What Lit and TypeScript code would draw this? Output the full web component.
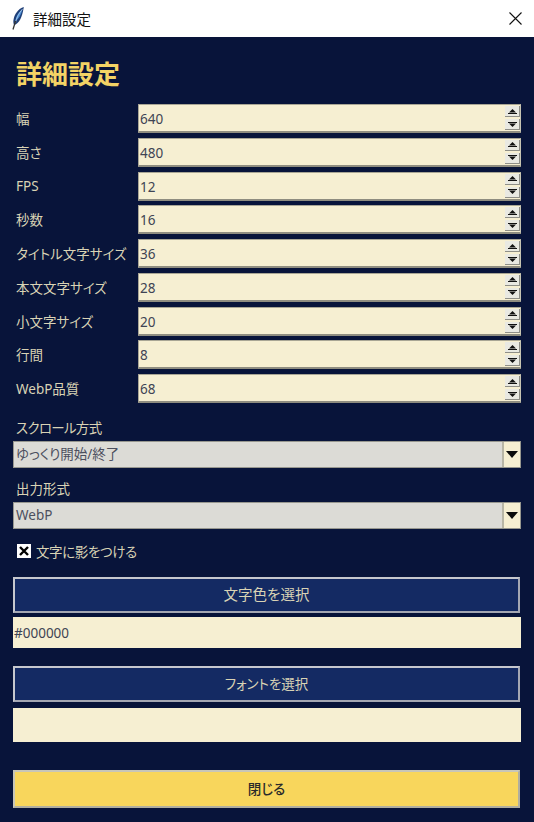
import { LitElement, html, css } from "lit";
import { customElement } from "lit/decorators.js";

const rows: [string, string][] = [
  ["幅", "640"], ["高さ", "480"], ["FPS", "12"], ["秒数", "16"],
  ["タイトル文字サイズ", "36"], ["本文文字サイズ", "28"], ["小文字サイズ", "20"],
  ["行間", "8"], ["WebP品質", "68"],
];

@customElement("app-root")
export class AppRoot extends LitElement {
  static styles = css`
    :host { display: block; width: 534px; height: 822px; overflow: hidden; background: #08143a;
      font-family: "Noto Sans", "Noto Sans CJK JP", sans-serif; font-size: 13.5px; color: #d9d3b5;
      font-feature-settings: "palt" 1; }
    * { box-sizing: border-box; }
    .titlebar { height: 37px; background: #fff; display: flex; align-items: center; padding: 0 12px 0 11px; color: #111; font-size: 14.5px; }
    .titlebar .feather { width: 15px; height: 26px; margin-right: 7px; }
    .titlebar .name { flex: 1; }
    .content { padding: 0 13px; display: flex; flex-direction: column; }
    h1 { margin: 18px 0 0 3px; font-size: 26px; line-height: 38px; height: 49px; font-weight: 700; color: #f3d365; }
    .rows { display: grid; grid-template-columns: 125px 383px; row-gap: 4.75px; grid-auto-rows: 29px; }
    .label { padding: 0 0 1px 3px; display: flex; align-items: center; height: 29px; white-space: nowrap; }
    .entry { background: #f6efd2; border: 1px solid #a9a695; border-right: 1px solid #c8c5b2; border-bottom: 2px solid #8f8d80; color: #3f4454;
      display: flex; align-items: center; padding: 2px 0 0 1px; }
    .entry .v { flex: 1; }
    .spin { width: 15px; height: 100%; margin-top: -2px; display: flex; flex-direction: column; gap: 2px; padding: 0; }
    .spin span { flex: 1; background: #e9e9e2; display: flex; align-items: center; justify-content: center; border-right: 1px solid #8f8f88; border-bottom: 1px solid #8f8f88; }
    .spin svg { width: 9px; height: 5px; display: block; }
    .fieldlabel { padding-left: 3px; height: 20px; line-height: 21px; white-space: nowrap; }
    .fieldlabel.first { margin-top: 15px; letter-spacing: -0.7px; }
    .fieldlabel.second { margin-top: 11px; }
    .combo { height: 27px; margin-top: 3px; background: #dcdbd6; border: 1px solid #97978f; display: flex; align-items: stretch; color: #4c4f5e; }
    .combo .v { flex: 1; padding-left: 2px; line-height: 25px; }
    .combo .arrow { width: 18px; background: #f6efd2; border-left: 2px solid #b8b6a6; display: flex; align-items: center; justify-content: center; }
    .combo .arrow svg { width: 12px; height: 7px; }
    .check { display: flex; align-items: center; height: 20px; margin-top: 12px; padding-left: 4px; gap: 5px; letter-spacing: -0.4px; }
    .box { width: 14px; height: 14px; background: #fff; display: flex; align-items: center; justify-content: center; }
    .box svg { width: 10px; height: 10px; display: block; }
    .btn { border: 2px solid; border-color: #c6c8ce #a4a7b3 #a4a7b3 #c6c8ce; display: flex; align-items: center; justify-content: center; color: #d9d3b5; background: #142a63; padding-bottom: 3px; margin-right: 1px; }
    .b1 { height: 36px; margin-top: 16px; font-size: 14.5px; }
    .b2 { height: 36px; margin-top: 18px; }
    .plain { background: #f6efd2; color: #3f4454; padding-left: 1px; display: flex; align-items: center; }
    .p1 { height: 31px; margin-top: 4px; }
    .p2 { height: 34px; margin-top: 6px; }
    .close { height: 38px; margin-top: 28px; background: #f8d65c; color: #2a2a2a; border-color: #c8c6b8 #b0ae9f #b0ae9f #c8c6b8; font-weight: 500; }
  `;

  render() {
    const up = html`<svg viewBox="0 0 9 5"><path d="M4.5 0 8 3.5H1Z" fill="#111"/><path d="M0 4.5H9" stroke="#111" stroke-width="1"/></svg>`;
    const down = html`<svg viewBox="0 0 9 5"><path d="M0 .5H9" stroke="#111" stroke-width="1"/><path d="M1 1.5H8L4.5 5Z" fill="#111"/></svg>`;
    const arrow = html`<svg viewBox="0 0 12 7"><path d="M0 0H12L6 7Z" fill="#0a0a0a"/></svg>`;
    return html`
      <div class="titlebar">
        <svg class="feather" viewBox="0 0 15 26">
          <path d="M12.8 1C7.5 2.5 3.2 8 2.4 14.5c-.2 1.8.1 3.5.8 4.6C8 17.5 11.2 11.5 12.8 1Z" fill="#1f3f78"/>
          <path d="M11.5 3.5C8 5.5 5 10 4.3 15.5 7.5 13 10 9 11.5 3.5Z" fill="#4b8fd6"/>
          <path d="M11.5 3C8 7 5.5 12 4.3 17" stroke="#c4d8ee" stroke-width=".7" fill="none"/>
          <path d="M4.6 15 2 23.5" stroke="#333" stroke-width="1.3" fill="none"/>
        </svg>
        <span class="name">詳細設定</span>
        <svg width="13" height="13" viewBox="0 0 13 13"><path d="M.5 .5 12.5 12.5M12.5 .5 .5 12.5" stroke="#111" stroke-width="1.1" fill="none"/></svg>
      </div>
      <div class="content">
        <h1>詳細設定</h1>
        <div class="rows">
          ${rows.map(([l, v]) => html`
            <div class="label">${l}</div>
            <div class="entry"><span class="v">${v}</span><div class="spin"><span>${up}</span><span>${down}</span></div></div>
          `)}
        </div>
        <div class="fieldlabel first">スクロール方式</div>
        <div class="combo"><span class="v">ゆっくり開始/終了</span><span class="arrow">${arrow}</span></div>
        <div class="fieldlabel second">出力形式</div>
        <div class="combo"><span class="v">WebP</span><span class="arrow">${arrow}</span></div>
        <div class="check">
          <span class="box"><svg viewBox="0 0 10 10"><path d="M1 1 9 9M9 1 1 9" stroke="#000" stroke-width="2.4" fill="none"/></svg></span>
          <span>文字に影をつける</span>
        </div>
        <div class="btn b1">文字色を選択</div>
        <div class="plain p1">#000000</div>
        <div class="btn b2">フォントを選択</div>
        <div class="plain p2"></div>
        <div class="btn close">閉じる</div>
      </div>
    `;
  }
}
